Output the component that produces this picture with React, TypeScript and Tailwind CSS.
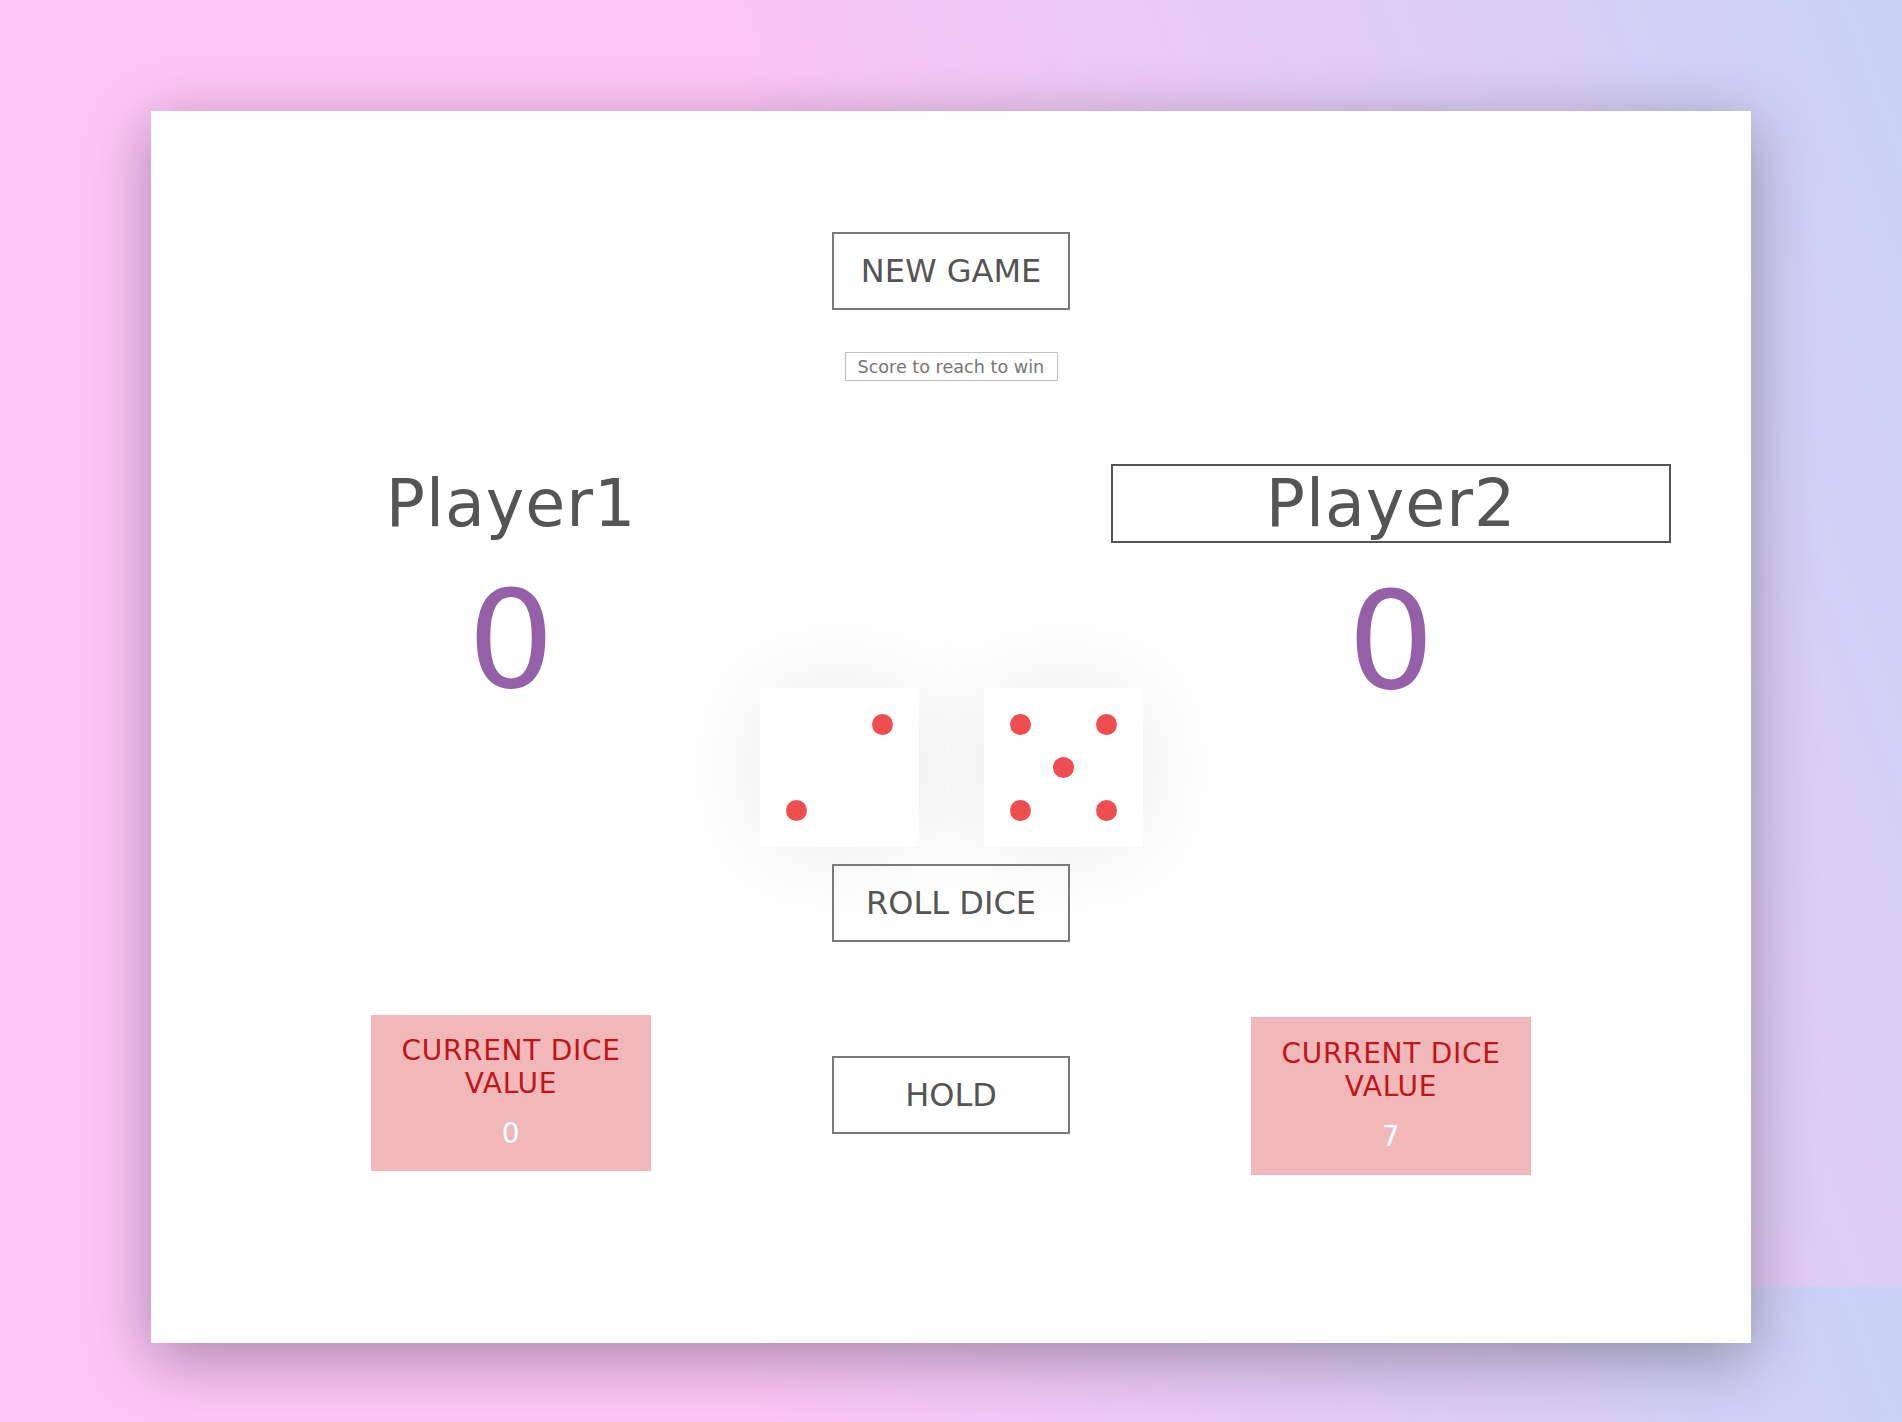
import React from "react";

const font = { fontFamily: '"DejaVu Sans", Verdana, sans-serif' };

function Die({ dots }: { dots: number[] }) {
  return (
    <div className="grid h-[159px] w-[159px] shrink-0 grid-cols-3 grid-rows-3 gap-[22px] bg-white p-[26px] shadow-[0_0_100px_rgba(0,0,0,0.09)]">
      {Array.from({ length: 9 }).map((_, i) => (
        <div
          key={i}
          className={
            dots.includes(i)
              ? "h-[21px] w-[21px] rounded-full bg-[#ee4e50]"
              : "h-[21px] w-[21px]"
          }
        />
      ))}
    </div>
  );
}

function CurrentBox({ value, tall }: { value: number; tall?: boolean }) {
  return (
    <div
      className={
        "flex w-[280px] flex-col items-center bg-[#f0b8b8] text-[28px] leading-[32.6px] tracking-[0.7px] " +
        (tall ? "h-[158px] pt-[21px]" : "h-[156px] pt-[20px]")
      }
    >
      <p className="text-center text-[#bf151b]">
        CURRENT DICE
        <br />
        VALUE
      </p>
      <p className="mt-[18px] text-white">{value}</p>
    </div>
  );
}

function Button({ label, className }: { label: string; className?: string }) {
  return (
    <button
      className={
        "h-[78px] w-[238px] shrink-0 border-2 border-[#7a7a7a] bg-transparent text-[32px] text-[#555] " +
        (className ?? "")
      }
    >
      {label}
    </button>
  );
}

export default function App() {
  return (
    <div
      className="min-h-[1422px] overflow-hidden bg-[linear-gradient(70deg,#fcc5f5_50%,#c7d2f6)] bg-[length:100%_1287px] pt-[111px]"
      style={font}
    >
      <div className="mx-auto flex h-[1232px] w-[1600px] flex-col items-center bg-white px-[80px] pt-[121px] shadow-[0_15px_60px_rgba(0,0,0,0.33)]">
        <Button label="NEW GAME" />
        <input
          placeholder="Score to reach to win"
          className="mt-[42px] h-[29px] w-[213px] border border-[#c2c2c2] px-3 text-[17.6px] text-[#555] placeholder:text-[#767676] focus:outline-none"
        />

        <div className="mt-[83px] flex w-[1440px] items-start">
          {/* player 1 */}
          <div className="flex w-[560px] shrink-0 flex-col items-center pt-[2px]">
            <h1 className="text-[65px] leading-[75px] tracking-[1px] text-[#555]">
              Player1
            </h1>
            <p className="mt-[20px] text-[136px] leading-[158px] text-[#9461a8]">
              0
            </p>
            <div className="mt-[296px]">
              <CurrentBox value={0} />
            </div>
          </div>

          {/* middle */}
          <div className="flex w-[320px] shrink-0 flex-col items-center pt-[224px]">
            <div className="flex shrink-0 gap-[65px]">
              <Die dots={[2, 6]} />
              <Die dots={[0, 2, 4, 6, 8]} />
            </div>
            <Button label="ROLL DICE" className="mt-[17px]" />
            <Button label="HOLD" className="mt-[114px]" />
          </div>

          {/* player 2 */}
          <div className="flex w-[560px] shrink-0 flex-col items-center">
            <input
              defaultValue="Player2"
              className="h-[79px] w-[560px] border-2 border-[#555] bg-transparent text-center text-[65px] leading-[75px] tracking-[1px] text-[#555] focus:outline-none"
            />
            <p className="mt-[19px] text-[136px] leading-[158px] text-[#9461a8]">
              0
            </p>
            <div className="mt-[297px]">
              <CurrentBox value={7} tall />
            </div>
          </div>
        </div>
      </div>
    </div>
  );
}
